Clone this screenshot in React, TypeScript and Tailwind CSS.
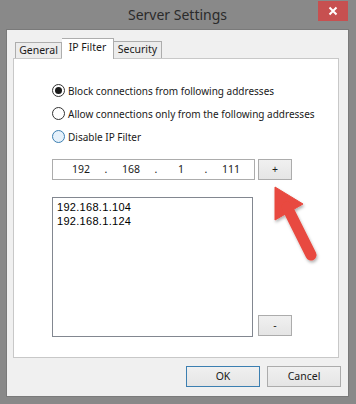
import React, { useState } from 'react';

const ui = { fontFamily: '"Noto Sans", "Open Sans", sans-serif' };

function Radio({ label, checked, hover }: { label: string; checked?: boolean; hover?: boolean }) {
  return (
    <div className="h-[23px] flex items-center whitespace-nowrap">
      <span
        className={
          'w-[13px] h-[13px] shrink-0 rounded-full border flex items-center justify-center ' +
          (hover ? 'border-[#3c7fb1] bg-[#e5f1fb]' : 'border-[#333333] bg-white')
        }
      >
        {checked && <span className="w-[7px] h-[7px] rounded-full bg-[#1a1a1a]" />}
      </span>
      <span className="ml-[3px] text-[10px] text-[#1a1a1a] leading-none">{label}</span>
    </div>
  );
}

function Button({ children, w, focus }: { children: React.ReactNode; w: string; focus?: boolean }) {
  return (
    <div
      className={
        w +
        ' h-[21px] border flex items-center justify-center text-[10.5px] text-[#1a1a1a] bg-gradient-to-b from-[#f0f0f0] to-[#e5e5e5] ' +
        (focus ? 'border-[#3c7fb1]' : 'border-[#acacac]')
      }
    >
      {children}
    </div>
  );
}

export default function App() {
  const [addresses] = useState(['192.168.1.104', '192.168.1.124']);
  const octets = ['192', '168', '1', '111'];

  return (
    <div className="w-[356px] h-[404px] bg-[#898989] pl-[6px] pr-[7px] pb-[7px] flex flex-col relative" style={ui}>
      {/* title bar */}
      <div className="h-[29px] relative flex items-center justify-center">
        <span className="text-[14px] text-[#2b2b2b] -mt-[1px]">Server Settings</span>
        <div className="absolute right-[1px] top-[1px] w-[30px] h-[20px] bg-[#c75050] flex items-center justify-center">
          <svg width="10" height="10" viewBox="0 0 10 10">
            <path d="M1.5 1.5 L8.5 8.5 M8.5 1.5 L1.5 8.5" stroke="white" strokeWidth="2" />
          </svg>
        </div>
      </div>

      {/* client */}
      <div className="flex-1 border border-[#7a7a7a] bg-[#f0f0f0] px-[6px] pt-[8px] flex flex-col">
        {/* tabs */}
        <div className="h-[20px] flex items-end pl-[2px] relative z-10 text-[10.5px] text-[#1a1a1a]">
          <div className="w-[47px] h-[16px] border border-b-0 border-[#adadad] bg-[#ececec] flex items-center justify-center">
            General
          </div>
          <div className="w-[52px] h-[21px] -mb-[1px] border border-b-0 border-l-0 border-[#adadad] bg-white flex items-center justify-center pb-[2px]">
            IP Filter
          </div>
          <div className="w-[48px] h-[17px] border border-b-0 border-l-0 border-[#adadad] bg-[#ececec] flex items-center justify-center">
            Security
          </div>
        </div>

        {/* panel */}
        <div className="w-[326px] h-[300px] border border-[#c8c8c8] bg-white pl-[38px] pt-[20px] flex flex-col">
          <Radio label="Block connections from following addresses" checked />
          <Radio label="Allow connections only from the following addresses" />
          <Radio label="Disable IP Filter" hover />

          <div className="mt-[11px] flex">
            <div className="w-[203px] h-[21px] border border-[#acacac] flex items-center pl-[9px] text-[10.5px] text-[#1a1a1a]">
              {octets.map((o, i) => (
                <React.Fragment key={i}>
                  <span className="w-[38px] text-center">{o}</span>
                  {i < 3 && <span className="w-[12px] text-center">.</span>}
                </React.Fragment>
              ))}
            </div>
            <div className="ml-[3px]">
              <Button w="w-[34px]">+</Button>
            </div>
          </div>

          <div className="mt-[17px] flex items-end">
            <div className="w-[201px] h-[140px] border border-[#828790] px-[4px] pt-[2px]">
              {addresses.map((a) => (
                <div
                  key={a}
                  className="text-[11px] leading-[14px] text-black tracking-[0.3px]"
                  style={{ fontFamily: '"Liberation Sans", Arial, sans-serif' }}
                >
                  {a}
                </div>
              ))}
            </div>
            <div className="ml-[5px] mb-[1px]">
              <Button w="w-[34px]">-</Button>
            </div>
          </div>
        </div>

        {/* dialog buttons */}
        <div className="mt-[8px] flex justify-end gap-[7px] mr-[1px]">
          <Button w="w-[74px]" focus>
            OK
          </Button>
          <Button w="w-[74px]">Cancel</Button>
        </div>
      </div>

      {/* annotation arrow */}
      <svg className="absolute left-[265px] top-[180px]" width="60" height="90" viewBox="0 0 60 90">
        <defs>
          <filter id="sh" x="-20%" y="-20%" width="150%" height="150%">
            <feDropShadow dx="1" dy="2" stdDeviation="1.5" floodColor="#000" floodOpacity="0.3" />
          </filter>
        </defs>
        <g filter="url(#sh)" fill="#e84a3f" stroke="#e84a3f">
          <path d="M10 7 L38 24 L10 40 Z" strokeWidth="1" strokeLinejoin="round" />
          <path d="M22 27 L46 75" strokeWidth="11" strokeLinecap="round" fill="none" />
        </g>
      </svg>
    </div>
  );
}
